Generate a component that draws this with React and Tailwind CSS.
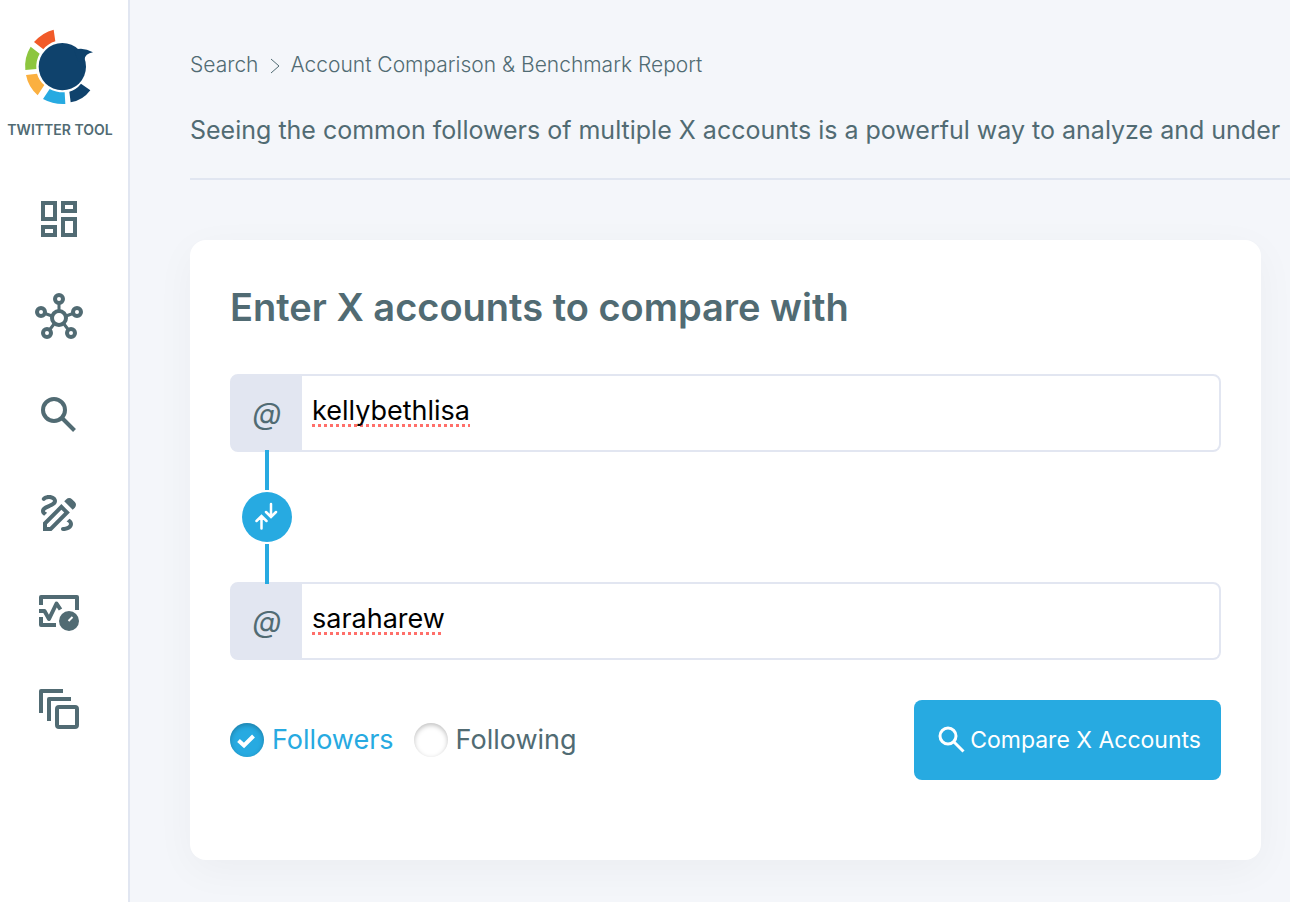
import { useState } from "react";
import { MdOutlineDraw } from "react-icons/md";

function Logo() {
  return (
    <svg viewBox="72 24 216 234" className="w-[72px] h-[78px]" aria-hidden="true">
      <path fill="#f15a29" d="M102 66Q128 37 161 29L166 64Q144 71 130 88Z" />
      <path fill="#8dc63f" d="M92 80L119 101Q107 122 109 147L76 150Q72 112 92 80Z" />
      <path fill="#fbb040" d="M78 165L111 161Q117 182 133 195L113 226Q85 201 78 165Z" />
      <path fill="#27aae1" d="M149 207Q170 218 194 217L196 252Q160 254 129 237Z" />
      <path fill="#0f426c" d="M208 215Q229 209 243 191L271 211Q248 242 212 247Z" />
      <circle cx="187" cy="140" r="71" fill="#0f426c" />
      <path fill="#0f426c" d="M222 90Q250 80 279 97Q255 101 253 120L235 125Z" />
    </svg>
  );
}

function Icon({ children }) {
  return (
    <svg viewBox="0 0 48 48" fill="none" stroke="currentColor" strokeWidth="4" className="size-12" aria-hidden="true">
      {children}
    </svg>
  );
}

const navItems = [
  {
    label: "Dashboard",
    icon: (
      <Icon>
        <path d="M8 8H20V24H8ZM28 8H40V16H28ZM8 32H20V40H8ZM28 24H40V40H28Z" />
      </Icon>
    ),
  },
  {
    label: "Network",
    icon: (
      <Icon>
        <circle cx="24" cy="25" r="7" />
        <circle cx="24" cy="6" r="4" />
        <circle cx="6" cy="19" r="4" />
        <circle cx="42" cy="19" r="4" />
        <circle cx="12" cy="40" r="4" />
        <circle cx="36" cy="40" r="4" />
        <path strokeWidth="3" d="M24 10V18M10 20.5L17 23M38 20.5L31 23M14.5 37L19 31M33.5 37L29 31" />
      </Icon>
    ),
  },
  {
    label: "Search",
    icon: (
      <Icon>
        <circle cx="19" cy="19" r="11" />
        <path d="M27 27L39.5 39.5" />
      </Icon>
    ),
  },
  { label: "Draw", icon: <MdOutlineDraw size={48} /> },
  {
    label: "Monitoring",
    icon: (
      <Icon>
        <path strokeLinejoin="round" d="M6 18V10H42V23M6 30V38H21" />
        <path strokeLinejoin="round" d="M4 24H9.5L14 32L21.5 16.5L25.5 22.5" />
        <circle cx="34" cy="34" r="10" fill="currentColor" stroke="none" />
        <path stroke="#fff" strokeWidth="2" d="M33.5 34L37.5 30" />
      </Icon>
    ),
  },
  {
    label: "Copies",
    icon: (
      <Icon>
        <path strokeLinejoin="round" d="M6 28V6H28M14 36V14H36" />
        <rect x="22" y="22" width="20" height="20" rx="2" />
      </Icon>
    ),
  },
];

function Sidebar() {
  return (
    <aside className="flex w-[130px] shrink-0 flex-col items-center border-r-2 border-[#e1e6f1] bg-white pt-7 pr-2">
      <a href="#" className="flex flex-col items-center">
        <Logo />
        <span className="mt-3 whitespace-nowrap text-sm leading-6 font-semibold">TWITTER TOOL</span>
      </a>
      <nav className="mt-[53px] flex flex-col gap-[50px] pr-0.5">
        {navItems.map((item) => (
          <a key={item.label} href="#" aria-label={item.label}>
            {item.icon}
          </a>
        ))}
      </nav>
    </aside>
  );
}

function AccountInput({ id, value, onChange }) {
  return (
    <div className="flex h-[78px] rounded-lg border-2 border-[#e2e6f1] bg-[#e2e6f1]">
      <label htmlFor={id} className="flex w-[70px] shrink-0 items-center justify-center text-3xl italic">
        @
      </label>
      <input
        id={id}
        type="text"
        value={value}
        onChange={(e) => onChange(e.target.value)}
        spellCheck={false}
        className="min-w-0 flex-1 rounded-r-md bg-white px-2.5 pb-1 text-[27px] text-black underline decoration-[#ff6f6a] decoration-dotted decoration-[3px] underline-offset-4 [text-decoration-skip-ink:none] focus:outline-none"
      />
    </div>
  );
}

function RadioOption({ label, value, selected, onSelect }) {
  const checked = selected === value;
  return (
    <label className={`flex items-center gap-2 text-[27px] leading-10 ${checked ? "text-[#27aae1]" : ""}`}>
      <span className="relative flex">
        <input
          type="radio"
          name="mode"
          value={value}
          checked={checked}
          onChange={() => onSelect(value)}
          className="size-[34px] appearance-none rounded-full bg-white shadow-[inset_0_2px_5px_rgba(0,0,0,0.25)] checked:bg-[#27aae1]"
        />
        {checked && (
          <svg viewBox="0 0 34 34" className="pointer-events-none absolute inset-0" fill="none" stroke="#fff" strokeWidth="4" aria-hidden="true">
            <path d="M8.5 17.5L14 22.5L23.5 13" />
          </svg>
        )}
      </span>
      {label}
    </label>
  );
}

export default function App() {
  const [first, setFirst] = useState("kellybethlisa");
  const [second, setSecond] = useState("saraharew");
  const [mode, setMode] = useState("followers");

  const swap = () => {
    setFirst(second);
    setSecond(first);
  };

  return (
    <div className="flex min-h-screen bg-[#f4f6fa] font-['Inter',sans-serif] text-[#516b73]">
      <Sidebar />

      <main className="min-w-0 flex-1 pt-[50px] pb-10 pl-[60px]">
        <header className="overflow-hidden border-b-2 border-[#e1e6f1] pb-[30px] whitespace-nowrap">
          <nav className="flex items-center text-[21px] leading-[30px] font-light">
            <a href="#">Search</a>
            <svg viewBox="0 0 12 18" className="mx-2.5 mt-0.5 h-[18px] w-3" fill="none" stroke="currentColor" aria-hidden="true">
              <path d="M2 2L10 9L2 16" />
            </svg>
            <span>Account Comparison &amp; Benchmark Report</span>
          </nav>
          <p className="mt-8 text-[25px] leading-9">
            Seeing the common followers of multiple X accounts is a powerful way to analyze and under
          </p>
        </header>

        {/* Comparison form */}
        <form
          onSubmit={(e) => e.preventDefault()}
          className="mt-[60px] mr-[29px] rounded-2xl bg-white px-10 pt-10 pb-20 shadow-[0_10px_40px_rgba(0,0,0,0.04)]"
        >
          <h1 className="mb-10 text-[38px] leading-[54px] font-semibold">Enter X accounts to compare with</h1>

          <AccountInput id="first-account" value={first} onChange={setFirst} />
          <div className="relative -my-0.5 ml-3 flex w-[50px] flex-col items-center gap-0.5">
            <span className="h-10 w-1 bg-[#27aae1]" />
            <button
              type="button"
              onClick={swap}
              aria-label="Swap accounts"
              className="flex size-[50px] items-center justify-center rounded-full bg-[#27aae1] text-white"
            >
              <svg viewBox="0 0 50 50" className="size-full" fill="none" stroke="currentColor" strokeWidth="2.5" strokeLinecap="round" aria-hidden="true">
                <path d="M19.5 36.5V24.5M14.5 29L19.5 24L24.5 29M29 12V24.5M24 20L29 25L34 20" />
              </svg>
            </button>
            <span className="h-10 w-1 bg-[#27aae1]" />
          </div>
          <AccountInput id="second-account" value={second} onChange={setSecond} />

          <div className="mt-10 flex items-center justify-between">
            <div className="flex gap-5">
              <RadioOption label="Followers" value="followers" selected={mode} onSelect={setMode} />
              <RadioOption label="Following" value="following" selected={mode} onSelect={setMode} />
            </div>
            <button
              type="submit"
              className="flex h-20 items-center gap-1 rounded-lg bg-[#27aae1] pr-5 pl-6 text-[23px] text-white"
            >
              <svg viewBox="0 0 28 28" className="size-7" fill="none" stroke="currentColor" strokeWidth="3" aria-hidden="true">
                <circle cx="10" cy="10" r="8" />
                <path d="M15.5 15.5L25.5 25.5" />
              </svg>
              Compare X Accounts
            </button>
          </div>
        </form>
      </main>
    </div>
  );
}
